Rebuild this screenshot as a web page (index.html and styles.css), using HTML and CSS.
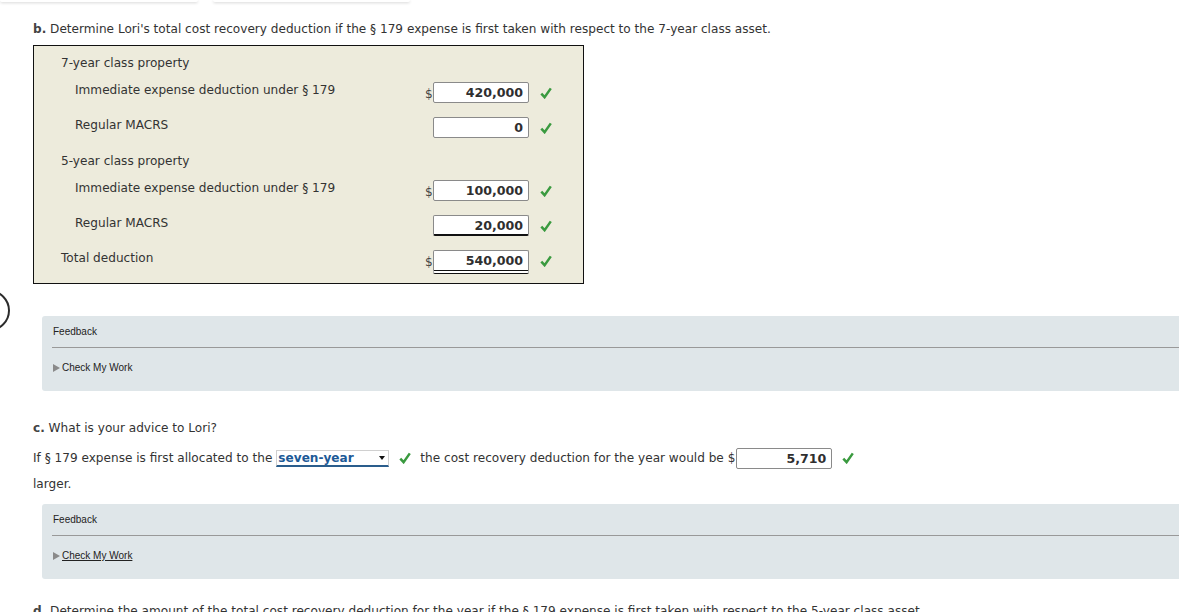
FILE: index.html
```html
<!DOCTYPE html>
<html lang="en">
<head>
  <meta charset="UTF-8" />
  <title>Cost Recovery | Problem</title>
  <link rel="stylesheet" href="styles.css">
</head>
<body>

  <div class="prev-cards">
    <div class="prev-card wide"></div>
    <div class="prev-card"></div>
  </div>

  <div class="side-circle"></div>

  <main class="problem">
    <p class="part-title"><b>b.</b> Determine Lori's total cost recovery deduction if the § 179 expense is first taken with respect to the 7-year class asset.</p>

    <div class="answer-table">
      <div class="row head">7-year class property</div>
      <div class="row">
        <span class="label sub">Immediate expense deduction under § 179</span>
        <span class="dollar">$</span>
        <span class="amount">420,000</span>
        <svg class="check" viewBox="0 0 12 12"><path d="M1.3 6.6 L4.6 10.2 L10.8 1.4" /></svg>
      </div>
      <div class="row">
        <span class="label sub">Regular MACRS</span>
        <span class="dollar"></span>
        <span class="amount">0</span>
        <svg class="check" viewBox="0 0 12 12"><path d="M1.3 6.6 L4.6 10.2 L10.8 1.4" /></svg>
      </div>
      <div class="row head gap">5-year class property</div>
      <div class="row">
        <span class="label sub">Immediate expense deduction under § 179</span>
        <span class="dollar">$</span>
        <span class="amount">100,000</span>
        <svg class="check" viewBox="0 0 12 12"><path d="M1.3 6.6 L4.6 10.2 L10.8 1.4" /></svg>
      </div>
      <div class="row">
        <span class="label sub">Regular MACRS</span>
        <span class="dollar"></span>
        <span class="amount single">20,000</span>
        <svg class="check" viewBox="0 0 12 12"><path d="M1.3 6.6 L4.6 10.2 L10.8 1.4" /></svg>
      </div>
      <div class="row last">
        <span class="label">Total deduction</span>
        <span class="dollar">$</span>
        <span class="amount double">540,000</span>
        <svg class="check" viewBox="0 0 12 12"><path d="M1.3 6.6 L4.6 10.2 L10.8 1.4" /></svg>
      </div>
    </div>

    <section class="feedback">
      <div class="fb-title">Feedback</div>
      <div class="fb-link"><span class="arrow"></span>Check My Work</div>
    </section>

    <p class="part-title c"><b>c.</b> What is your advice to Lori?</p>

    <div class="advice">
      <span>If § 179 expense is first allocated to the</span>
      <span class="select">seven-year<span class="caret"></span></span>
      <svg class="check" viewBox="0 0 12 12"><path d="M1.3 6.6 L4.6 10.2 L10.8 1.4" /></svg>
      <span class="after">the cost recovery deduction for the year would be $</span>
      <span class="amount">5,710</span>
      <svg class="check" viewBox="0 0 12 12"><path d="M1.3 6.6 L4.6 10.2 L10.8 1.4" /></svg>
    </div>
    <p class="wrap-line">larger.</p>

    <section class="feedback second">
      <div class="fb-title">Feedback</div>
      <div class="fb-link"><span class="arrow"></span><u>Check My Work</u></div>
    </section>

    <p class="part-title next"><b>d.</b> Determine the amount of the total cost recovery deduction for the year if the § 179 expense is first taken with respect to the 5-year class asset.</p>
  </main>

</body>
</html>
```

FILE: styles.css
```css
* {
  box-sizing: border-box;
  margin: 0;
  padding: 0;
}

body {
  font-family: 'DejaVu Sans', Verdana, sans-serif;
  font-size: 12.1px;
  color: #333;
  background: #fff;
  overflow: hidden;
  height: 612px;
  position: relative;
}

/* bottoms of the cards scrolled above */
.prev-cards {
  display: flex;
  gap: 15px;
  height: 2px;
}

.prev-card {
  width: 197px;
  background: #fff;
  border-radius: 0 0 4px 4px;
  box-shadow: 0 1px 3px rgba(0, 0, 0, 0.18);
}

.prev-card.wide {
  width: 198px;
}

.side-circle {
  position: absolute;
  left: -31px;
  top: 290px;
  width: 41px;
  height: 41px;
  border: 2.5px solid #2c2c2c;
  border-radius: 50%;
}

.problem {
  padding-left: 33px;
}

.part-title {
  line-height: 16px;
  margin-top: 19px;
}

.part-title b {
  color: #444;
}

.answer-table {
  width: 551px;
  margin-top: 8px;
  background: #edebdc;
  border: 1px solid #111;
  padding-top: 8px;
}

.row {
  display: flex;
  align-items: flex-start;
  height: 35px;
}

.row.head {
  height: 27px;
  padding-left: 27px;
  padding-top: 1px;
  line-height: 16px;
}

.row.gap {
  margin-top: 1px;
}

.row.last {
  height: 34px;
}

.label {
  width: 391px;
  padding-left: 27px;
  padding-top: 1px;
  line-height: 16px;
}

.label.sub {
  padding-left: 41px;
}

.dollar {
  width: 8px;
  margin-top: 5px;
  line-height: 16px;
  color: #444;
}

.amount {
  width: 96px;
  height: 21px;
  margin-top: 1px;
  background: #fff;
  border: 1px solid #8a8a8a;
  border-radius: 2px;
  text-align: right;
  padding-right: 5px;
  font-weight: 700;
  font-size: 12.6px;
  line-height: 19px;
  color: #2f2f2f;
}

.amount.single {
  border-bottom: 2px solid #111;
}

.amount.double {
  height: 24px;
  border-bottom: 4px double #111;
}

.check {
  width: 12px;
  height: 12px;
  margin: 6px 0 0 11px;
  fill: none;
  stroke: #3a9a3f;
  stroke-width: 2.5;
}

.feedback {
  margin: 32px 0 0 9px;
  width: calc(100% + 20px);
  height: 75px;
  background: #dfe6e9;
  border-radius: 3px;
  padding: 10px 0 0 10px;
  font-family: 'Liberation Sans', Arial, sans-serif;
  font-size: 10px;
  color: #222;
}

.fb-title {
  line-height: 12px;
  padding-left: 1px;
  padding-bottom: 9px;
  border-bottom: 1px solid #999;
}

.fb-link {
  display: flex;
  align-items: center;
  margin-top: 14px;
  line-height: 12px;
}

.arrow {
  width: 0;
  height: 0;
  margin: 0 2px 0 1px;
  border-top: 4px solid transparent;
  border-bottom: 4px solid transparent;
  border-left: 7px solid #8a8a8a;
}

.part-title.c {
  margin-top: 29px;
}

.advice {
  display: flex;
  align-items: center;
  height: 22px;
  margin-top: 11px;
  white-space: nowrap;
}

.advice .check {
  margin: 0 0 0 10px;
}

.select {
  position: relative;
  width: 113px;
  height: 17px;
  margin-left: 4px;
  background: #fff;
  border: 1px solid #d0d0d0;
  border-bottom: 2px solid #2a5d8c;
  padding-left: 1px;
  line-height: 14px;
  font-weight: 700;
  color: #1d5a97;
}

.caret {
  position: absolute;
  right: 3px;
  top: 5px;
  border-left: 3px solid transparent;
  border-right: 3px solid transparent;
  border-top: 4px solid #111;
}

.after {
  margin-left: 9px;
}

.advice .amount {
  margin-top: 0;
  margin-left: 1px;
}

.wrap-line {
  margin-top: 7px;
  line-height: 16px;
}

.feedback.second {
  margin-top: 12px;
}

.fb-link u {
  text-decoration-color: #222;
}

.part-title.next {
  margin-top: 24px;
  white-space: nowrap;
}
```
